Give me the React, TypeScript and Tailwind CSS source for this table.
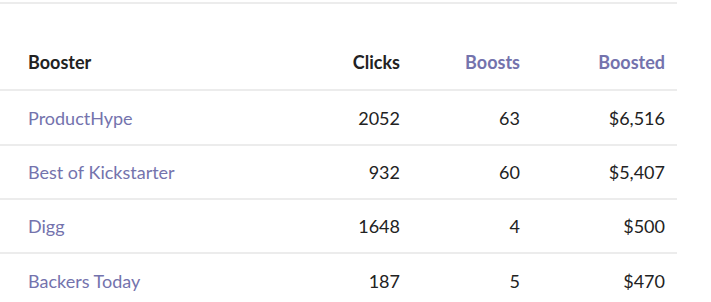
import React from 'react';

interface BoosterRow {
    name: string;
    clicks: number;
    boosts: number;
    boosted: string;
}

const rows: BoosterRow[] = [
    { name: "ProductHype", clicks: 2052, boosts: 63, boosted: "$6,516" },
    { name: "Best of Kickstarter", clicks: 932, boosts: 60, boosted: "$5,407" },
    { name: "Digg", clicks: 1648, boosts: 4, boosted: "$500" },
    { name: "Backers Today", clicks: 187, boosts: 5, boosted: "$470" },
];

export default function App() {
    return (
        <div className="bg-white min-h-screen font-['Lato',sans-serif] text-[18px] text-[#222] antialiased">
            <div className="w-[677px] mt-[2px] border-t-2 border-[#ececec] pt-[30px]">
                <table className="w-full border-collapse">
                    <thead>
                        <tr className="h-[56px] border-b-2 border-[#ececec]">
                            <th className="pl-[28px] pt-[2px] text-left font-bold">Booster</th>
                            <th className="w-[120px] pt-[2px] text-right font-bold">Clicks</th>
                            <th className="w-[120px] pt-[2px] text-right font-bold text-[#7473ad]">Boosts</th>
                            <th className="w-[157px] pr-[12px] pt-[2px] text-right font-bold text-[#7473ad]">Boosted</th>
                        </tr>
                    </thead>
                    <tbody>
                        {rows.map((row) => (
                            <tr key={row.name} className="h-[54px] first:h-[55px] border-b-2 border-[#ececec] last:border-b-0">
                                <td className="pl-[28px] pt-[1px] text-[#7473ad]">{row.name}</td>
                                <td className="pt-[1px] text-right">{row.clicks}</td>
                                <td className="pt-[1px] text-right">{row.boosts}</td>
                                <td className="pr-[12px] pt-[1px] text-right">{row.boosted}</td>
                            </tr>
                        ))}
                    </tbody>
                </table>
            </div>
        </div>
    );
}
